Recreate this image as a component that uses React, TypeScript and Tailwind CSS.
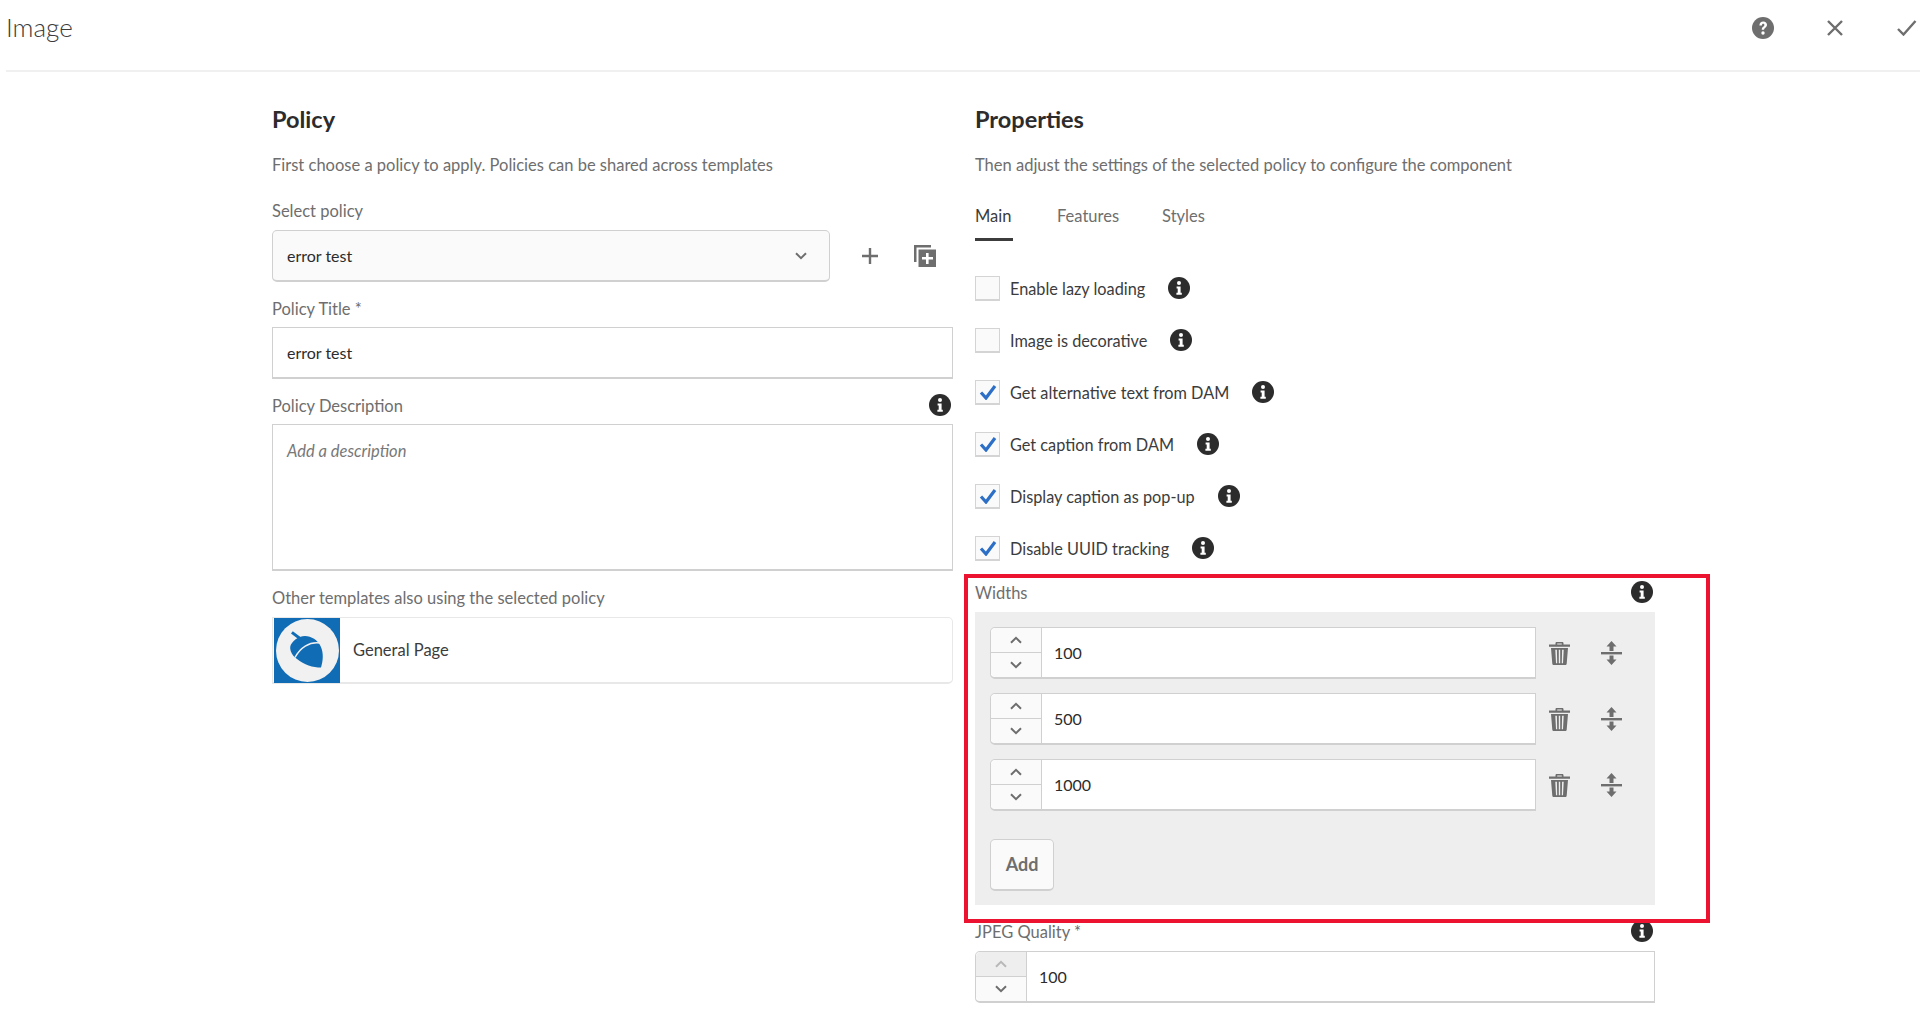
import React from 'react';

const font = "font-['Lato','Open_Sans',sans-serif]";

const InfoIcon = ({ className = '' }: { className?: string }) => (
  <svg viewBox="0 0 22 22" className={`w-[22px] h-[22px] shrink-0 ${className}`}>
    <circle cx="11" cy="11" r="11" fill="#2c2c2c" />
    <circle cx="11" cy="6" r="2" fill="#fff" />
    <path d="M8.600 9.400h4v6.400h1.200v2H8.400v-2h1.300v-4.400H8.600z" fill="#fff" />
  </svg>
);

const Chevron = ({ up = false, color = '#6e6e6e' }: { up?: boolean; color?: string }) => (
  <svg viewBox="0 0 12 8" className="w-[12px] h-[8px]">
    <path d={up ? 'M1 6.800 6 1.800l5 5' : 'M1 1.200 6 6.200l5-5'} fill="none" stroke={color} strokeWidth="2" />
  </svg>
);

const TrashIcon = () => (
  <svg viewBox="0 0 21 23" className="w-[21px] h-[23px]">
    <path d="M6.500 2.500V1.200C6.500.5 7 0 7.700 0h5.600c.7 0 1.200.5 1.200 1.200v1.300H21v2.300H0V2.500zm1.700 0h4.600V1.500H8.200z" fill="#6e6e6e" fillRule="evenodd" />
    <path d="M2 6h17l-1.300 15.700c-.1.800-.7 1.300-1.500 1.300H4.800c-.8 0-1.400-.5-1.500-1.300zM6.300 7.800l.7 13.400h1.200L7.900 7.800zm3.500 0v13.400h1.400V7.800zm3.300 0-.3 13.400H14l.7-13.400z" fill="#6e6e6e" fillRule="evenodd" />
  </svg>
);

const ReorderIcon = () => (
  <svg viewBox="0 0 21 24" className="w-[21px] h-[24px]">
    <path d="M10.500 0l5 5.600h-3v4.400h-4V5.600h-3z" fill="#6e6e6e" />
    <rect x="0" y="11" width="21" height="2.400" fill="#6e6e6e" />
    <path d="M10.500 24l5-5.600h-3v-4h-4v4h-3z" fill="#6e6e6e" />
  </svg>
);

const CopyAddIcon = () => (
  <svg viewBox="0 0 22 22" className="w-[22px] h-[22px] ml-[36px]">
    <path d="M0 0h17v2.500H2.500V17H0z" fill="#6e6e6e" />
    <path d="M4.500 4.500H22V22H4.500z" fill="#6e6e6e" />
    <path d="M12 8h2.600v4H19v2.500h-4.400V19H12v-4.500H8V12h4z" fill="#fff" />
  </svg>
);

const AcornLogo = () => (
  <div className="w-[66px] h-[65px] ml-[1px] bg-[#116cb6] shrink-0 flex items-center justify-center">
    <svg viewBox="0 0 63 63" className="w-[63px] h-[63px]">
      <circle cx="31.500" cy="31.500" r="31.500" fill="#f1f1f1" />
      <path d="M15 14.500l1.800-2.200 8.700 6.400-2 2.200z" fill="#116cb6" />
      <path d="M24 18C32 15 41 20 44.500 27 48 34 47 42 45 48.500 37 48.500 28 46 21 40 15 36 12 28 16 24 18 21 21 19 24 18z" fill="#116cb6" />
      <path d="M19 38.500C24 29 33 22.500 44 24" fill="none" stroke="#f1f1f1" strokeWidth="1.400" />
    </svg>
  </div>
);

const NumberField = ({ value, upDisabled = false, className = '' }: { value: string; upDisabled?: boolean; className?: string }) => (
  <div className={`flex h-[52px] border border-[#d0d0d0] border-b-2 rounded-l-[5px] bg-white ${className}`}>
    <div className="w-[51px] shrink-0 flex flex-col border-r border-[#d0d0d0] rounded-l-[5px] overflow-hidden">
      <div className={`flex-1 flex items-center justify-center border-b border-[#d0d0d0] ${upDisabled ? 'bg-[#eeeeee]' : 'bg-[#fafafa]'}`}>
        <Chevron up color={upDisabled ? '#b8b8b8' : '#6e6e6e'} />
      </div>
      <div className="flex-1 flex items-center justify-center bg-[#fafafa]">
        <Chevron />
      </div>
    </div>
    <div className="flex items-center pl-[12px] text-[16px] text-[#2c2c2c]">{value}</div>
  </div>
);

const CheckRow = ({ label, checked }: { label: string; checked?: boolean }) => (
  <div className="h-[52px] flex items-center">
    <div className="w-[25px] h-[25px] border border-[#d4d4d4] border-b-2 bg-[#fafafa] flex items-center justify-center shrink-0">
      {checked && (
        <svg viewBox="0 0 18 16" className="w-[18px] h-[16px]">
          <path d="M2 8.500 7 14 16 2" fill="none" stroke="#2d6fc7" strokeWidth="3.200" />
        </svg>
      )}
    </div>
    <span className="ml-[10px] pt-[2px] text-[16.3px] text-[#3c3c3c]">{label}</span>
    <InfoIcon className="ml-[23px]" />
  </div>
);

const Label = ({ children, className = '' }: { children: React.ReactNode; className?: string }) => (
  <div className={`pt-[1px] text-[16.5px] leading-[24px] text-[#6e6e6e] ${className}`}>{children}</div>
);

const widths = ['100', '500', '1000'];

export default function App() {
  return (
    <div className={`relative h-[1022px] overflow-hidden bg-white ${font}`}>
      <header className="ml-[6px] h-[72px] pb-[15px] border-b-2 border-[#f0f0f0] flex items-center justify-between">
        <h1 className="text-[26px] font-light text-[#3c3c3c]">Image</h1>
        <div className="flex items-center text-[#6e6e6e]">
          <svg viewBox="0 0 22 22" className="w-[22px] h-[22px]">
            <circle cx="11" cy="11" r="11" fill="#6e6e6e" />
            <path d="M7.400 8.400C7.500 6 9 4.600 11.300 4.600c2.200 0 3.700 1.300 3.700 3.200 0 1.500-.8 2.300-1.900 3.100-.8.600-1 1-1 1.900H9.800c-.1-1.500.4-2.300 1.400-3 .8-.6 1.200-1 1.200-1.700 0-.8-.5-1.300-1.200-1.300-.8 0-1.300.6-1.300 1.600z" fill="#fff" />
            <circle cx="11" cy="16" r="1.700" fill="#fff" />
          </svg>
          <svg viewBox="0 0 16 16" className="w-[16px] h-[16px] ml-[53px]">
            <path d="M1 1l14 14M15 1 1 15" stroke="#6e6e6e" strokeWidth="2.400" fill="none" />
          </svg>
          <svg viewBox="0 0 20 16" className="w-[20px] h-[16px] ml-[54px] mr-[3px]">
            <path d="M1 9l5.500 5.500L18.500 1" stroke="#6e6e6e" strokeWidth="2.400" fill="none" />
          </svg>
        </div>
      </header>

      <main className="pl-[272px] pt-[32px] flex gap-[22px]">
        <section className="w-[681px]">
          <h2 className="text-[23.5px] leading-[30px] font-bold text-[#2c2c2c]">Policy</h2>
          <p className="mt-[19px] text-[16.5px] leading-[24px] text-[#6e6e6e]">
            First choose a policy to apply. Policies can be shared across templates
          </p>
          <Label className="mt-[21px]">Select policy</Label>
          <div className="mt-[7px] flex items-center">
            <div className="w-[558px] h-[52px] border border-[#d0d0d0] border-b-2 rounded-[5px] bg-[#fafafa] flex items-center justify-between pl-[14px] pr-[22px] text-[16px] text-[#2c2c2c]">
              error test
              <Chevron />
            </div>
            <svg viewBox="0 0 16 16" className="w-[16px] h-[16px] ml-[32px]">
              <path d="M8 0v16M0 8h16" stroke="#6e6e6e" strokeWidth="2.400" />
            </svg>
            <CopyAddIcon />
          </div>
          <Label className="mt-[14px]">Policy Title *</Label>
          <div className="mt-[6px] h-[52px] border border-[#d0d0d0] border-b-2 flex items-center pl-[14px] text-[16px] text-[#2c2c2c]">
            error test
          </div>
          <div className="mt-[14px] flex items-center justify-between">
            <Label>Policy Description</Label>
            <InfoIcon className="mr-[2px] mb-[1px]" />
          </div>
          <div className="mt-[6px] h-[147px] border border-[#d0d0d0] border-b-2 pl-[14px] pt-[14px] text-[16.5px] italic text-[#787878]">
            Add a description
          </div>
          <Label className="mt-[14px]">Other templates also using the selected policy</Label>
          <div className="mt-[7px] h-[67px] border border-[#e8e8e8] border-b-2 rounded-r-[5px] flex items-center">
            <AcornLogo />
            <span className="ml-[13px] text-[16.5px] text-[#3c3c3c]">General Page</span>
          </div>
        </section>

        <section className="w-[680px]">
          <h2 className="text-[23.5px] leading-[30px] font-bold text-[#2c2c2c]">Properties</h2>
          <p className="mt-[19px] text-[16.5px] leading-[24px] text-[#6e6e6e]">
            Then adjust the settings of the selected policy to configure the component
          </p>
          <nav className="mt-[27px] flex text-[16.5px] leading-[24px] h-[37px]">
            <div className="h-[37px] border-b-[3px] border-[#3c3c3c] text-[#3c3c3c] w-[38px]">Main</div>
            <div className="ml-[44px] text-[#6e6e6e]">Features</div>
            <div className="ml-[43px] text-[#6e6e6e]">Styles</div>
          </nav>
          <div className="mt-[21px]">
            <CheckRow label="Enable lazy loading" />
            <CheckRow label="Image is decorative" />
            <CheckRow label="Get alternative text from DAM" checked />
            <CheckRow label="Get caption from DAM" checked />
            <CheckRow label="Display caption as pop-up" checked />
            <CheckRow label="Disable UUID tracking" checked />
          </div>
          <div className="mt-[6px] flex items-center justify-between">
            <Label>Widths</Label>
            <InfoIcon className="mr-[2px] mb-[1px]" />
          </div>
          <div className="mt-[7px] h-[293px] bg-[#eeeeee] pl-[15px] pt-[15px]">
            <div className="flex flex-col gap-[14px]">
              {widths.map((w) => (
                <div key={w} className="flex items-center">
                  <NumberField value={w} className="w-[546px]" />
                  <div className="ml-[13px] w-[21px]"><TrashIcon /></div>
                  <div className="ml-[31px] w-[21px]"><ReorderIcon /></div>
                </div>
              ))}
            </div>
            <button className="mt-[28px] w-[64px] h-[52px] border border-[#d0d0d0] border-b-2 rounded-[5px] bg-[#fafafa] text-[18px] font-bold text-[#6e6e6e]">
              Add
            </button>
          </div>
          <div className="mt-[14px] flex items-center justify-between">
            <Label>JPEG Quality *</Label>
            <InfoIcon className="mr-[2px] mb-[1px]" />
          </div>
          <NumberField value="100" upDisabled className="mt-[7px]" />
        </section>
      </main>

      {/* red annotation over the widths group */}
      <div className="absolute left-[964px] top-[574px] w-[746px] h-[349px] border-[4px] border-[#ec1330] pointer-events-none" />
    </div>
  );
}
